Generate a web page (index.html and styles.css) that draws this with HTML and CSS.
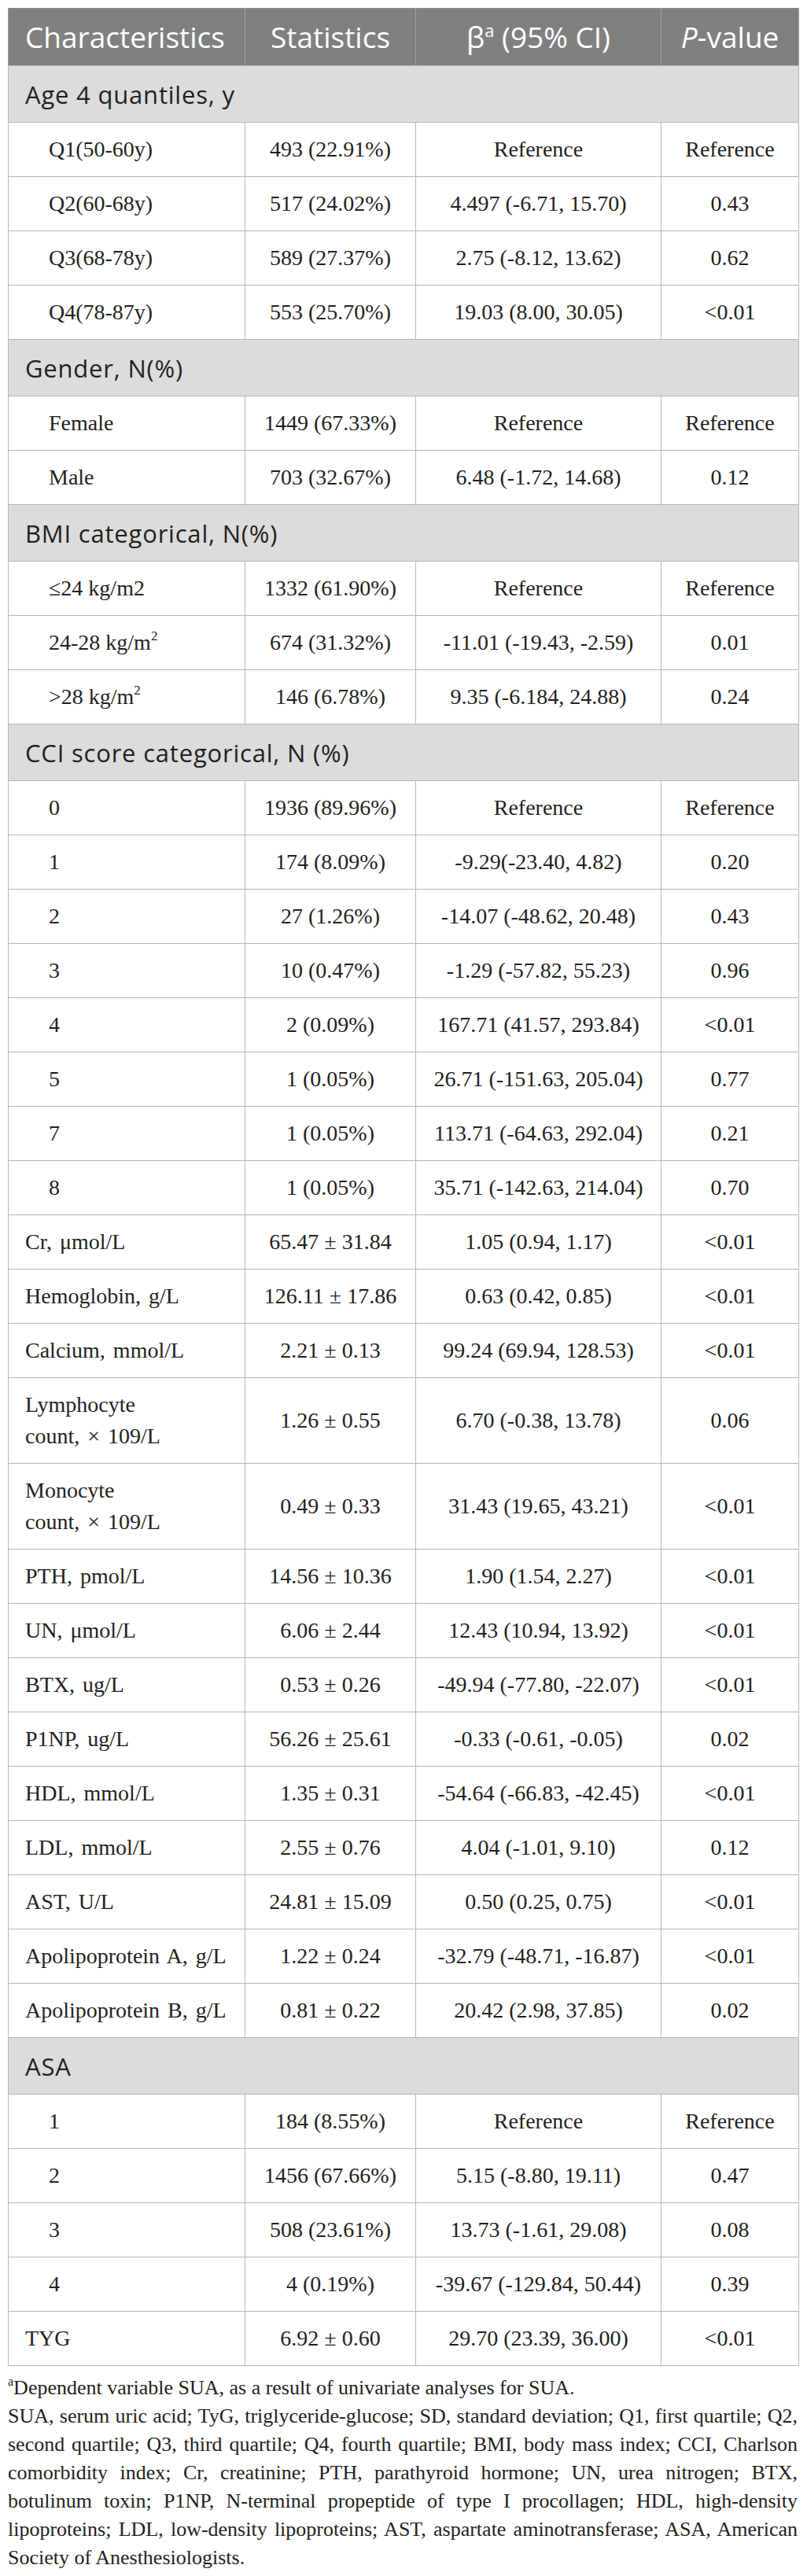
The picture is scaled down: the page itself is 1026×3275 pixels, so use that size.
FILE: index.html
```html
<!DOCTYPE html>
<html lang="en">
<head>
<meta charset="utf-8">
<title>Univariate analyses for SUA</title>
<link rel="stylesheet" href="styles.css">
</head>
<body>
<div class="wrap">
<table class="stats">
  <colgroup>
    <col class="c1"><col class="c2"><col class="c3"><col class="c4">
  </colgroup>
  <thead>
    <tr>
      <th class="left">Characteristics</th>
      <th>Statistics</th>
      <th>β<sup>a</sup> (95% CI)</th>
      <th><i>P</i>-value</th>
    </tr>
  </thead>
  <tbody>
    <tr class="section"><td colspan="4">Age 4 quantiles, y</td></tr>
    <tr><td class="sub">Q1(50-60y)</td><td>493 (22.91%)</td><td>Reference</td><td>Reference</td></tr>
    <tr><td class="sub">Q2(60-68y)</td><td>517 (24.02%)</td><td>4.497 (-6.71, 15.70)</td><td>0.43</td></tr>
    <tr><td class="sub">Q3(68-78y)</td><td>589 (27.37%)</td><td>2.75 (-8.12, 13.62)</td><td>0.62</td></tr>
    <tr><td class="sub">Q4(78-87y)</td><td>553 (25.70%)</td><td>19.03 (8.00, 30.05)</td><td>&lt;0.01</td></tr>

    <tr class="section"><td colspan="4">Gender, N(%)</td></tr>
    <tr><td class="sub">Female</td><td>1449 (67.33%)</td><td>Reference</td><td>Reference</td></tr>
    <tr><td class="sub">Male</td><td>703 (32.67%)</td><td>6.48 (-1.72, 14.68)</td><td>0.12</td></tr>

    <tr class="section"><td colspan="4">BMI categorical, N(%)</td></tr>
    <tr><td class="sub">≤24 kg/m2</td><td>1332 (61.90%)</td><td>Reference</td><td>Reference</td></tr>
    <tr><td class="sub">24-28 kg/m<sup>2</sup></td><td>674 (31.32%)</td><td>-11.01 (-19.43, -2.59)</td><td>0.01</td></tr>
    <tr><td class="sub">&gt;28 kg/m<sup>2</sup></td><td>146 (6.78%)</td><td>9.35 (-6.184, 24.88)</td><td>0.24</td></tr>

    <tr class="section"><td colspan="4">CCI score categorical, N (%)</td></tr>
    <tr><td class="sub">0</td><td>1936 (89.96%)</td><td>Reference</td><td>Reference</td></tr>
    <tr><td class="sub">1</td><td>174 (8.09%)</td><td>-9.29(-23.40, 4.82)</td><td>0.20</td></tr>
    <tr><td class="sub">2</td><td>27 (1.26%)</td><td>-14.07 (-48.62, 20.48)</td><td>0.43</td></tr>
    <tr><td class="sub">3</td><td>10 (0.47%)</td><td>-1.29 (-57.82, 55.23)</td><td>0.96</td></tr>
    <tr><td class="sub">4</td><td>2 (0.09%)</td><td>167.71 (41.57, 293.84)</td><td>&lt;0.01</td></tr>
    <tr><td class="sub">5</td><td>1 (0.05%)</td><td>26.71 (-151.63, 205.04)</td><td>0.77</td></tr>
    <tr><td class="sub">7</td><td>1 (0.05%)</td><td>113.71 (-64.63, 292.04)</td><td>0.21</td></tr>
    <tr><td class="sub">8</td><td>1 (0.05%)</td><td>35.71 (-142.63, 214.04)</td><td>0.70</td></tr>

    <tr><td class="main">Cr, μmol/L</td><td>65.47 ± 31.84</td><td>1.05 (0.94, 1.17)</td><td>&lt;0.01</td></tr>
    <tr><td class="main">Hemoglobin, g/L</td><td>126.11 ± 17.86</td><td>0.63 (0.42, 0.85)</td><td>&lt;0.01</td></tr>
    <tr><td class="main">Calcium, mmol/L</td><td>2.21 ± 0.13</td><td>99.24 (69.94, 128.53)</td><td>&lt;0.01</td></tr>
    <tr><td class="main">Lymphocyte<br>count, × 109/L</td><td>1.26 ± 0.55</td><td>6.70 (-0.38, 13.78)</td><td>0.06</td></tr>
    <tr><td class="main">Monocyte<br>count, × 109/L</td><td>0.49 ± 0.33</td><td>31.43 (19.65, 43.21)</td><td>&lt;0.01</td></tr>
    <tr><td class="main">PTH, pmol/L</td><td>14.56 ± 10.36</td><td>1.90 (1.54, 2.27)</td><td>&lt;0.01</td></tr>
    <tr><td class="main">UN, μmol/L</td><td>6.06 ± 2.44</td><td>12.43 (10.94, 13.92)</td><td>&lt;0.01</td></tr>
    <tr><td class="main">BTX, ug/L</td><td>0.53 ± 0.26</td><td>-49.94 (-77.80, -22.07)</td><td>&lt;0.01</td></tr>
    <tr><td class="main">P1NP, ug/L</td><td>56.26 ± 25.61</td><td>-0.33 (-0.61, -0.05)</td><td>0.02</td></tr>
    <tr><td class="main">HDL, mmol/L</td><td>1.35 ± 0.31</td><td>-54.64 (-66.83, -42.45)</td><td>&lt;0.01</td></tr>
    <tr><td class="main">LDL, mmol/L</td><td>2.55 ± 0.76</td><td>4.04 (-1.01, 9.10)</td><td>0.12</td></tr>
    <tr><td class="main">AST, U/L</td><td>24.81 ± 15.09</td><td>0.50 (0.25, 0.75)</td><td>&lt;0.01</td></tr>
    <tr><td class="main">Apolipoprotein A, g/L</td><td>1.22 ± 0.24</td><td>-32.79 (-48.71, -16.87)</td><td>&lt;0.01</td></tr>
    <tr><td class="main">Apolipoprotein B, g/L</td><td>0.81 ± 0.22</td><td>20.42 (2.98, 37.85)</td><td>0.02</td></tr>

    <tr class="section"><td colspan="4">ASA</td></tr>
    <tr><td class="sub">1</td><td>184 (8.55%)</td><td>Reference</td><td>Reference</td></tr>
    <tr><td class="sub">2</td><td>1456 (67.66%)</td><td>5.15 (-8.80, 19.11)</td><td>0.47</td></tr>
    <tr><td class="sub">3</td><td>508 (23.61%)</td><td>13.73 (-1.61, 29.08)</td><td>0.08</td></tr>
    <tr><td class="sub">4</td><td>4 (0.19%)</td><td>-39.67 (-129.84, 50.44)</td><td>0.39</td></tr>
    <tr><td class="main">TYG</td><td>6.92 ± 0.60</td><td>29.70 (23.39, 36.00)</td><td>&lt;0.01</td></tr>
  </tbody>
</table>

<div class="notes">
  <p class="note"><sup>a</sup>Dependent variable SUA, as a result of univariate analyses for SUA.</p>
  <p class="note">
    <span class="jl">SUA, serum uric acid; TyG, triglyceride-glucose; SD, standard deviation; Q1, first quartile; Q2,</span>
    <span class="jl">second quartile; Q3, third quartile; Q4, fourth quartile; BMI, body mass index; CCI, Charlson</span>
    <span class="jl">comorbidity index; Cr, creatinine; PTH, parathyroid hormone; UN, urea nitrogen; BTX,</span>
    <span class="jl">botulinum toxin; P1NP, N-terminal propeptide of type I procollagen; HDL, high-density</span>
    <span class="jl">lipoproteins; LDL, low-density lipoproteins; AST, aspartate aminotransferase; ASA, American</span>
    <span class="ll">Society of Anesthesiologists.</span>
  </p>
</div>
</div>
</body>
</html>
```

FILE: styles.css
```css
html, body {
  margin: 0;
  padding: 0;
  background: #ffffff;
}

.wrap {
  padding: 10px 0 0 10px;
  width: 1005px;
}

.stats {
  border-collapse: collapse;
  table-layout: fixed;
  width: 1005px;
  font-family: "Liberation Serif", "Times New Roman", serif;
  font-size: 28px;
  color: #231f20;
}

.c1 { width: 301px; }
.c2 { width: 217px; }
.c3 { width: 312px; }
.c4 { width: 175px; }

.stats th {
  background: #808080;
  color: #ffffff;
  font-family: "Open Sans", "Noto Sans", sans-serif;
  font-weight: 400;
  font-size: 37px;
  line-height: 40px;
  padding: 16px 4px 16px;
  text-align: center;
  border: 1px solid #a3a3a3;
  border-top-color: #909090;
  border-bottom-color: #b2b2b2;
  white-space: nowrap;
}

.stats th.left {
  text-align: left;
  padding-left: 21px;
}

.stats th sup {
  font-size: 22px;
  line-height: 0;
  vertical-align: 14px;
}

.stats th i {
  font-style: italic;
}

.stats td {
  border: 1px solid #b7b7b7;
  padding: 14px 4px 14px;
  line-height: 40px;
  text-align: center;
  vertical-align: middle;
  white-space: nowrap;
}

.stats td.sub {
  text-align: left;
  padding-left: 51px;
}

.stats td.main {
  text-align: left;
  padding-left: 21px;
  word-spacing: 3px;
}

.stats td sup {
  font-size: 17px;
  line-height: 0;
  vertical-align: 12px;
}

.stats tr.section td {
  background: #dcdcdc;
  font-family: "Open Sans", "Noto Sans", sans-serif;
  font-size: 31px;
  letter-spacing: 0.8px;
  color: #231f20;
  text-align: left;
  padding: 16px 4px 15px 21px;
}

.notes {
  margin-top: 10px;
  width: 1004px;
  font-family: "Liberation Serif", "Times New Roman", serif;
  font-size: 26px;
  line-height: 36px;
  color: #231f20;
}

.note {
  margin: 0;
}

.note sup {
  font-size: 16px;
  line-height: 0;
  vertical-align: 11px;
}

.jl {
  display: block;
  white-space: nowrap;
  text-align: justify;
  text-align-last: justify;
}

.ll {
  display: block;
  white-space: nowrap;
  text-align: left;
}
```
